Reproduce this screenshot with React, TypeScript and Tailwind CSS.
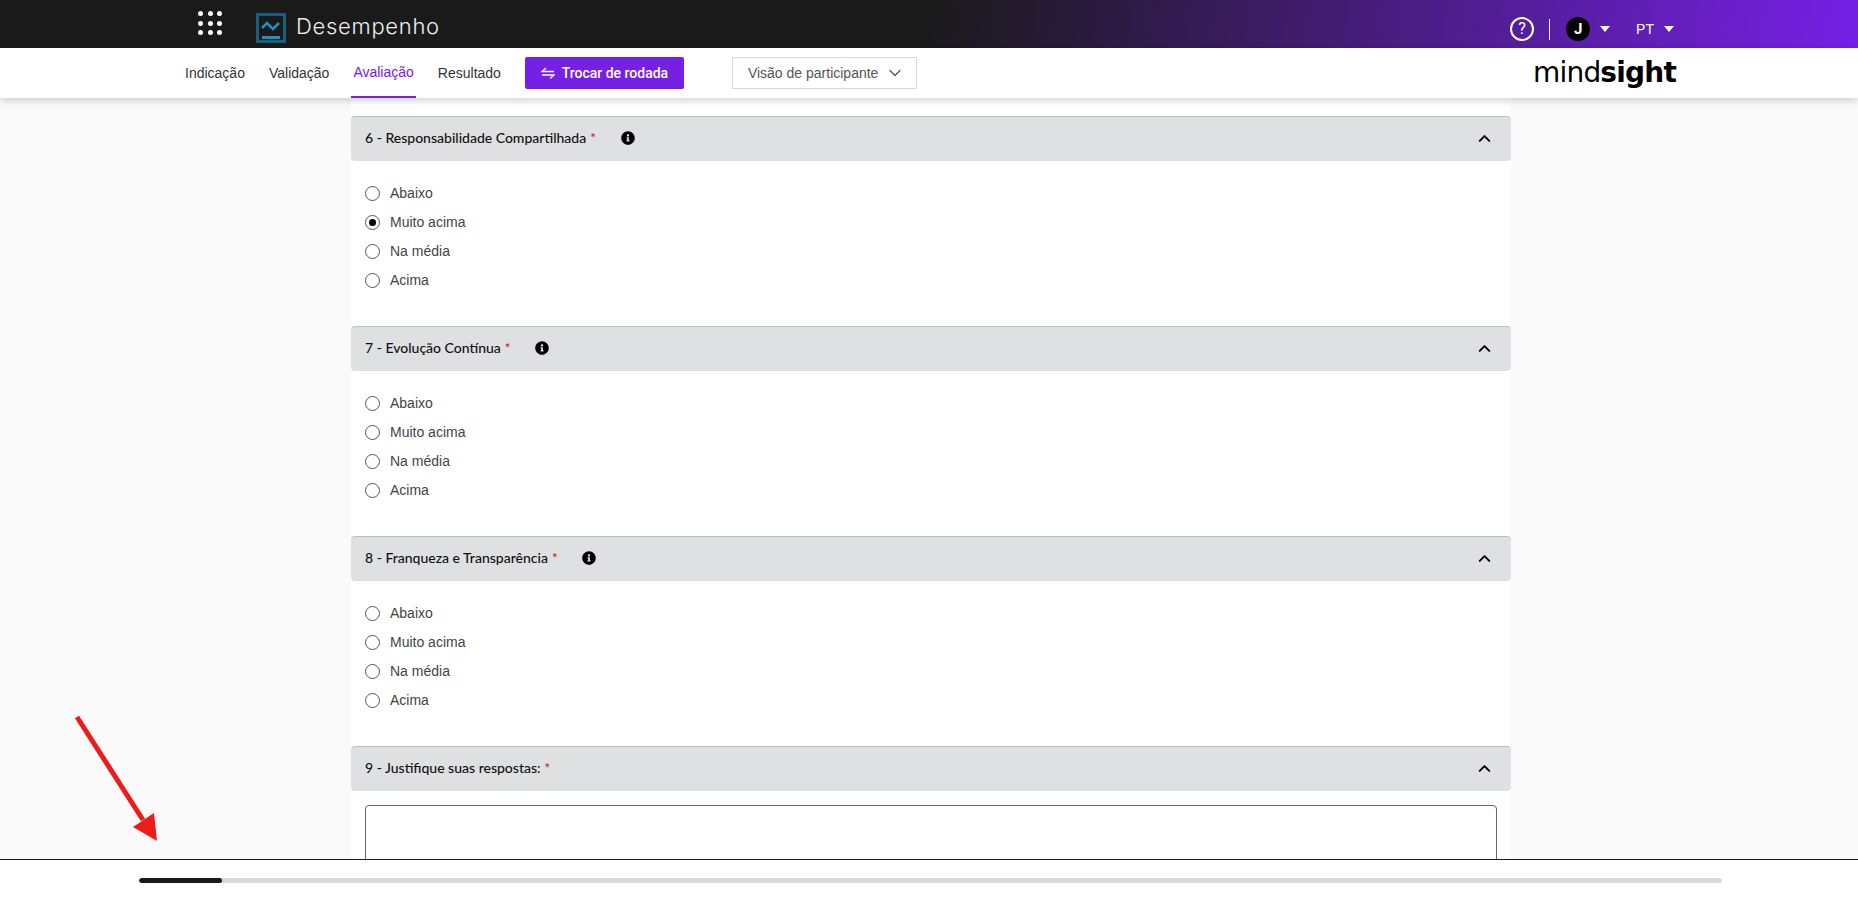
import { ChevronDown, ChevronUp } from "lucide-react";
import { FaInfoCircle } from "react-icons/fa";

const options = ["Abaixo", "Muito acima", "Na média", "Acima"];

const questions = [
  { title: "6 - Responsabilidade Compartilhada", selected: "Muito acima" },
  { title: "7 - Evolução Contínua", selected: "" },
  { title: "8 - Franqueza e Transparência", selected: "" },
];

const navItems = ["Indicação", "Validação", "Avaliação", "Resultado"];

function Caret() {
  return <span className="ml-[10px] block h-0 w-0 border-x-[5px] border-t-[6px] border-x-transparent border-t-white" />;
}

function Radio({ checked }: { checked: boolean }) {
  return (
    <span className="flex h-[15px] w-[15px] items-center justify-center rounded-full border border-[#555] bg-white">
      {checked && <span className="h-[7px] w-[7px] rounded-full bg-black" />}
    </span>
  );
}

function QuestionHeader({ title, info = true }: { title: string; info?: boolean }) {
  return (
    <div className="flex h-[45px] items-center rounded-[4px] border-t border-[#bcbdbf] bg-[#dfe0e2] pb-[2px] pl-[14px] pr-[17px] font-['Lato',sans-serif] text-[14px] font-medium text-[#111]">
      <span className="-translate-y-[1px]">{title}</span>
      <span className="ml-[4px] text-[13px] leading-none text-[#c01818]">*</span>
      {info && <FaInfoCircle className="ml-[25px] h-[14px] w-[14px] text-black" />}
      <ChevronUp className="ml-auto h-[19px] w-[19px] text-black" strokeWidth={2.5} />
    </div>
  );
}

function Question({ title, selected }: { title: string; selected: string }) {
  return (
    <section className="h-[210px]">
      <QuestionHeader title={title} />
      <div className="flex flex-col pl-[14px] pt-[18px]">
        {options.map((option) => (
          <label key={option} className="flex h-[29px] items-center gap-[10px] text-[14px] text-[#444]">
            <Radio checked={option === selected} />
            <span>{option}</span>
          </label>
        ))}
      </div>
    </section>
  );
}

export default function App() {
  return (
    <div className="relative flex h-[920px] w-full flex-col overflow-hidden bg-[#fafafa] font-['Liberation_Sans',sans-serif]">
      <header className="flex h-[48px] shrink-0 items-center bg-[linear-gradient(100deg,#1a1a1a_50%,#7620e6_100%)] pl-[198px] pr-[184px] text-white">
        <div className="-mt-[2px] grid grid-cols-3 gap-[4.5px]">
          {Array.from({ length: 9 }).map((_, i) => (
            <span key={i} className="h-[5px] w-[5px] rounded-full bg-white" />
          ))}
        </div>
        <svg className="ml-[34px] mt-[8px] h-[30px] w-[30px]" viewBox="0 0 30 30" fill="none">
          <rect x="1.5" y="1.5" width="27" height="27" stroke="#175f7d" strokeWidth="3" />
          <path d="M6 15 L11 10 L17 16 L23 10" stroke="#1f93bd" strokeWidth="2.5" />
          <rect x="6" y="23" width="18" height="3" fill="#1f93bd" />
        </svg>
        <span className="ml-[10px] mt-[5px] font-['Inter',sans-serif] text-[22px] font-light tracking-[0.7px] text-[#eee]">
          Desempenho
        </span>
        <div className="ml-auto mt-[10px] flex items-center">
          <span className="flex h-[24px] w-[24px] items-center justify-center rounded-full border-2 border-white font-['Roboto',sans-serif] text-[16px]">
            ?
          </span>
          <span className="ml-[15px] h-[21px] w-px bg-white" />
          <span className="ml-[16px] flex h-[24px] w-[24px] items-center justify-center rounded-full bg-black font-['Roboto',sans-serif] text-[15px] font-bold">
            J
          </span>
          <Caret />
          <span className="ml-[26px] text-[14px]">PT</span>
          <Caret />
        </div>
      </header>

      <nav className="relative z-10 flex h-[50px] shrink-0 items-center bg-white pl-[185px] pr-[182px] shadow-[0_2px_8px_rgba(0,0,0,0.2)]">
        <div className="flex h-full items-center gap-[24px] text-[14px] text-[#333]">
          {navItems.map((item) => (
            <a
              key={item}
              className={
                item === "Avaliação"
                  ? "-mx-[2px] flex h-full items-center border-b-[2px] border-[#7620e6] px-[2px] text-[#7620e6]"
                  : "flex h-full items-center"
              }
            >
              {item}
            </a>
          ))}
        </div>
        <button className="ml-[24px] flex h-[32px] w-[159px] items-center justify-center gap-[7px] rounded-[2px] bg-[#7620e6] font-['Roboto',sans-serif] text-[14px] font-medium text-white">
          <svg className="h-[12px] w-[14px]" viewBox="0 0 14 12" fill="none" stroke="currentColor" strokeWidth="1.3">
            <path d="M5 1 L1 4.5 H13" />
            <path d="M1 8 H13 L9 11.5" />
          </svg>
          Trocar de rodada
        </button>
        <button className="ml-[48px] flex h-[32px] w-[185px] items-center gap-[7px] border border-[#d8d8d8] bg-white pl-[15px] text-[14px] text-[#555]">
          Visão de participante
          <ChevronDown className="h-[20px] w-[20px]" strokeWidth={1.5} />
        </button>
        <span className="ml-auto font-['DejaVu_Sans',sans-serif] text-[28px] leading-none tracking-[-0.8px] text-black">
          mind<b>sight</b>
        </span>
      </nav>

      <main className="min-h-0 flex-1 overflow-hidden">
        <div className="ml-[351px] h-full w-[1160px] bg-white pt-[18px]">
          {questions.map((q) => (
            <Question key={q.title} title={q.title} selected={q.selected} />
          ))}
          <QuestionHeader title="9 - Justifique suas respostas:" info={false} />
          <div className="mx-[14px] mt-[14px] h-[120px] rounded-[4px] border border-[#666] bg-white" />
        </div>
      </main>

      <footer className="z-10 flex h-[61px] shrink-0 items-center border-t border-[#1a1a1a] bg-white pb-[20px] pl-[139px] pr-[136px]">
        <div className="h-[5px] w-full overflow-hidden rounded-full bg-[#d9d9d9]">
          <div className="h-full w-[83px] rounded-full bg-[#1a1a1a]" />
        </div>
      </footer>

      <svg className="absolute left-[70px] top-[710px] z-20 h-[140px] w-[95px]" viewBox="70 710 95 140">
        <line x1="77" y1="717" x2="143" y2="820" stroke="#ec1c1c" strokeWidth="5" />
        <polygon points="157,841 133,827 154,813" fill="#ec1c1c" />
      </svg>
    </div>
  );
}
